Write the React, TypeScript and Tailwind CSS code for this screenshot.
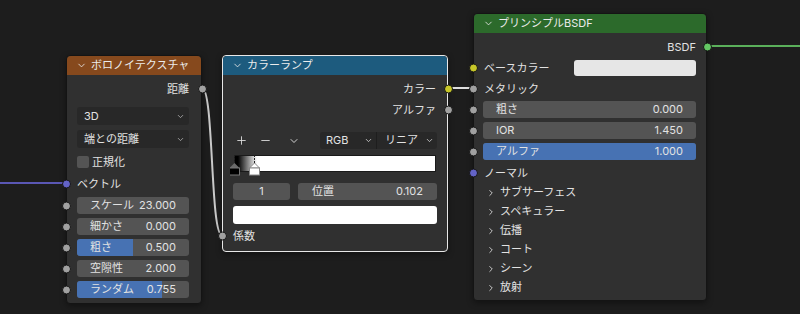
import { ChevronDown, ChevronRight, Plus, Minus } from "lucide-react";

type SocketProps = { color: string; side: "left" | "right" };

function Socket({ color, side }: SocketProps) {
  return (
    <span
      className={`absolute top-1/2 -translate-y-1/2 w-[9px] h-[9px] rounded-full border border-[#161616] z-10 ${color} ${
        side === "left" ? "-left-[5.5px]" : "-right-[5.5px]"
      }`}
    />
  );
}

function Header({ title, color }: { title: string; color: string }) {
  return (
    <div className={`flex items-center gap-[4px] h-[19px] pl-[9px] rounded-t-[4px] text-[11px] text-[#ececec] ${color}`}>
      <ChevronDown size={11} strokeWidth={1.8} />
      <span>{title}</span>
    </div>
  );
}

function Slider({ label, value, fill, pad, socket = true }: { label: string; value: string; fill?: number; pad: string; socket?: boolean }) {
  return (
    <div className={`relative h-[17px] ${pad}`}>
      {socket && <Socket color="bg-[#a1a1a1]" side="left" />}
      <div className="relative h-full rounded-[3px] bg-[#545454] overflow-hidden flex items-center justify-between px-[13px]">
        {fill !== undefined && <div className="absolute inset-y-0 left-0 bg-[#4772b3]" style={{ width: `${fill * 100}%` }} />}
        <span className="relative">{label}</span>
        <span className="relative">{value}</span>
      </div>
    </div>
  );
}

function Dropdown({ label }: { label: string }) {
  return (
    <div className="flex items-center justify-between h-[18px] rounded-[3px] bg-[#282828] pl-[7px] pr-[4px]">
      <span>{label}</span>
      <ChevronDown size={9} strokeWidth={2} className="text-[#bbbbbb]" />
    </div>
  );
}

function Wires() {
  return (
    <svg className="absolute inset-0" width={800} height={314}>
      <path d="M0 183 L66 183" stroke="#5a57b4" strokeWidth={2} fill="none" />
      <path d="M202 88 C214 88, 210 235, 222 235" stroke="#c8c8c8" strokeWidth={2} fill="none" />
      <path d="M447 88 L473 88" stroke="#dedede" strokeWidth={2} fill="none" />
      <path d="M707 46 L800 46" stroke="#5bb05b" strokeWidth={2} fill="none" />
    </svg>
  );
}

function VoronoiNode() {
  const pad = "pl-[10px] pr-[12px]";
  return (
    <div className="absolute left-[66px] top-[55px] w-[136px] rounded-[4px] bg-[#303030] border border-[#141414] pb-[5px] shadow-[0_2px_6px_rgba(0,0,0,0.4)]">
      <Header title="ボロノイテクスチャ" color="bg-[#86491d]" />
      <div className="relative h-[20px] mt-[4px] flex items-center justify-end pr-[12px]">
        <span>距離</span>
        <Socket color="bg-[#a1a1a1]" side="right" />
      </div>
      <div className={`mt-[8px] ${pad}`}>
        <Dropdown label="3D" />
      </div>
      <div className={`mt-[5px] ${pad}`}>
        <Dropdown label="端との距離" />
      </div>
      <div className={`mt-[5px] h-[18px] flex items-center gap-[3px] ${pad}`}>
        <span className="w-[12px] h-[12px] rounded-[2px] bg-[#545454]" />
        <span>正規化</span>
      </div>
      <div className="relative h-[20px] mt-[3px] flex items-center pl-[10px]">
        <Socket color="bg-[#6363c7]" side="left" />
        <span>ベクトル</span>
      </div>
      <div className="flex flex-col gap-[4px] mt-[3px]">
        <Slider label="スケール" value="23.000" pad={pad} />
        <Slider label="細かさ" value="0.000" pad={pad} />
        <Slider label="粗さ" value="0.500" fill={0.5} pad={pad} />
        <Slider label="空隙性" value="2.000" pad={pad} />
        <Slider label="ランダム" value="0.755" fill={0.755} pad={pad} />
      </div>
    </div>
  );
}

function RampMarkers() {
  return (
    <svg className="absolute left-[-3px] top-0" width={40} height={22}>
      <line x1={4.5} y1={0} x2={4.5} y2={10} stroke="#222" strokeWidth={1} strokeDasharray="2 1" />
      <line x1={24.5} y1={0} x2={24.5} y2={10} stroke="#222" strokeWidth={1} strokeDasharray="2 1" />
      <path d="M4.5 8 L9.5 13 L-0.5 13 Z" fill="#6a6a6a" />
      <rect x={-0.5} y={13} width={10} height={7} fill="#000" stroke="#777" strokeWidth={1} />
      <path d="M24.5 8 L29.5 13 L19.5 13 Z" fill="#ffffff" stroke="#888" strokeWidth={1} />
      <rect x={19.5} y={13} width={10} height={7} fill="#fff" stroke="#888" strokeWidth={1} />
    </svg>
  );
}

function ColorRampNode() {
  const pad = "pl-[10px] pr-[10px]";
  return (
    <div className="absolute left-[222px] top-[55px] w-[226px] rounded-[4px] bg-[#303030] border border-[#e8e8e8] pb-[5px] shadow-[0_2px_6px_rgba(0,0,0,0.4)]">
      <Header title="カラーランプ" color="bg-[#1d5b7e]" />
      <div className="relative h-[20px] mt-[4px] flex items-center justify-end pr-[11px]">
        <span>カラー</span>
        <Socket color="bg-[#c7c729]" side="right" />
      </div>
      <div className="relative h-[20px] mt-[1px] flex items-center justify-end pr-[11px]">
        <span>アルファ</span>
        <Socket color="bg-[#a1a1a1]" side="right" />
      </div>
      <div className={`mt-[12px] h-[17px] flex items-center ${pad}`}>
        <Plus size={13} strokeWidth={1.6} className="ml-[2px]" />
        <Minus size={13} strokeWidth={1.6} className="ml-[11px]" />
        <ChevronDown size={12} strokeWidth={1.8} className="ml-[16px]" />
        <div className="ml-auto flex h-full rounded-[3px] bg-[#282828] overflow-hidden">
          <div className="w-[57px] flex items-center justify-between pl-[6px] pr-[3px] border-r border-[#1e1e1e]">
            <span>RGB</span>
            <ChevronDown size={9} strokeWidth={2} />
          </div>
          <div className="w-[60px] flex items-center justify-between pl-[8px] pr-[3px]">
            <span>リニア</span>
            <ChevronDown size={9} strokeWidth={2} />
          </div>
        </div>
      </div>
      <div className={`mt-[6px] h-[20px] ${pad}`}>
        <div className="relative h-full">
          <div className="h-[17px] ml-[1px] mr-[1px] border border-[#1a1a1a] bg-[linear-gradient(to_right,#000_1.5%,#fff_11%)]" />
          <RampMarkers />
        </div>
      </div>
      <div className={`mt-[8px] h-[17px] flex gap-[8px] ${pad}`}>
        <div className="w-[57px] rounded-[3px] bg-[#545454] flex items-center justify-center">1</div>
        <div className="flex-1 rounded-[3px] bg-[#545454] flex items-center justify-between px-[14px]">
          <span>位置</span>
          <span>0.102</span>
        </div>
      </div>
      <div className={`mt-[6px] ${pad}`}>
        <div className="h-[18px] rounded-[3px] bg-white" />
      </div>
      <div className="relative h-[20px] mt-[2px] flex items-center pl-[10px]">
        <Socket color="bg-[#a1a1a1]" side="left" />
        <span>係数</span>
      </div>
    </div>
  );
}

function Panel({ label }: { label: string }) {
  return (
    <div className="h-[19px] flex items-center gap-[4px] pl-[12px]">
      <ChevronRight size={10} strokeWidth={2} />
      <span>{label}</span>
    </div>
  );
}

function BsdfNode() {
  const pad = "pl-[9px] pr-[10px]";
  return (
    <div className="absolute left-[473px] top-[13px] w-[234px] rounded-[4px] bg-[#303030] border border-[#141414] pb-[3px] shadow-[0_2px_6px_rgba(0,0,0,0.4)]">
      <Header title="プリンシプルBSDF" color="bg-[#2c6a2b]" />
      <div className="relative h-[20px] mt-[4px] flex items-center justify-end pr-[10px]">
        <span>BSDF</span>
        <Socket color="bg-[#63c763]" side="right" />
      </div>
      <div className="relative h-[20px] mt-[1px] flex items-center justify-between pl-[10px] pr-[10px]">
        <Socket color="bg-[#c7c729]" side="left" />
        <span>ベースカラー</span>
        <div className="w-[122px] h-[16px] rounded-[3px] bg-[#e6e6e6]" />
      </div>
      <div className="relative h-[20px] mt-[1px] flex items-center pl-[10px]">
        <Socket color="bg-[#a1a1a1]" side="left" />
        <span>メタリック</span>
      </div>
      <div className="flex flex-col gap-[4px] mt-[2px]">
        <Slider label="粗さ" value="0.000" pad={pad} />
        <Slider label="IOR" value="1.450" pad={pad} />
        <Slider label="アルファ" value="1.000" fill={1} pad={pad} />
      </div>
      <div className="relative h-[20px] mt-[3px] flex items-center pl-[10px]">
        <Socket color="bg-[#6363c7]" side="left" />
        <span>ノーマル</span>
      </div>
      <Panel label="サブサーフェス" />
      <Panel label="スペキュラー" />
      <Panel label="伝播" />
      <Panel label="コート" />
      <Panel label="シーン" />
      <Panel label="放射" />
    </div>
  );
}

export default function App() {
  return (
    <div className="relative w-[800px] h-[314px] overflow-hidden bg-[#1d1d1d] text-[11px] leading-none text-[#e2e2e2] font-['Inter','Noto_Sans_CJK_JP',sans-serif]">
      <Wires />
      <VoronoiNode />
      <ColorRampNode />
      <BsdfNode />
    </div>
  );
}
